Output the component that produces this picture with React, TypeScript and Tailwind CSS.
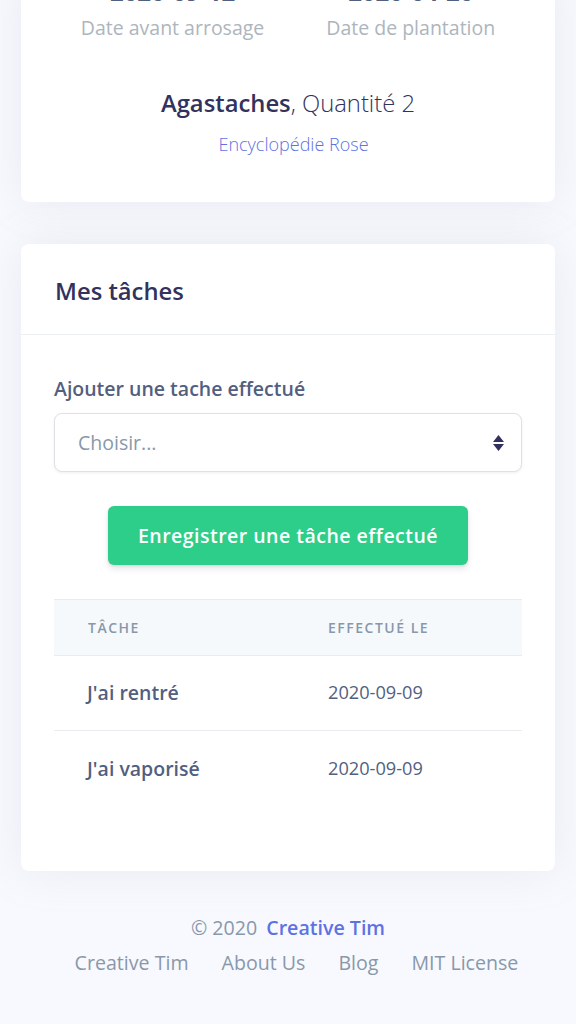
import { useState } from 'react';

interface Task {
  id: number;
  name: string;
  date: string;
}

const tasks: Task[] = [
  { id: 1, name: "J'ai rentré", date: '2020-09-09' },
  { id: 2, name: "J'ai vaporisé", date: '2020-09-09' },
];

const footerLinks = ['Creative Tim', 'About Us', 'Blog', 'MIT License'];

export default function App() {
  const [choice, setChoice] = useState('');

  return (
    <div className="min-h-[1024px] w-[576px] overflow-hidden bg-[#f8f9fe] px-[21px] font-['Open_Sans',sans-serif]">
      {/* Plant card (top cut off) */}
      <div className="rounded-b-[8px] bg-white pb-[44px] text-center shadow-[0_0_45px_0_rgba(136,152,170,0.15)]">
        <div className="-mt-[25px] flex justify-center gap-[62px]">
          <div className="flex flex-col items-center">
            <span className="text-[24px] leading-[34px] font-bold text-[#525f7f]">2020-09-12</span>
            <span className="mt-[4px] text-[19.5px] leading-[29px] text-[#adb5bd]">Date avant arrosage</span>
          </div>
          <div className="flex flex-col items-center">
            <span className="text-[24px] leading-[34px] font-bold text-[#525f7f]">2020-04-20</span>
            <span className="mt-[4px] text-[19.5px] leading-[29px] text-[#adb5bd]">Date de plantation</span>
          </div>
        </div>
        <h3 className="mt-[44px] text-[23.8px] leading-[34px] text-[#32325d]">
          <span className="font-semibold">Agastaches</span>
          <span className="font-light">, Quantité 2</span>
        </h3>
        <a className="mt-[11px] block pl-[11px] text-[18px] leading-[27px] font-light text-[#5e72e4]">Encyclopédie Rose</a>
      </div>

      {/* Tasks card */}
      <div className="mt-[42px] rounded-[8px] bg-white shadow-[0_0_45px_0_rgba(136,152,170,0.15)]">
        <div className="border-b border-[#edf0f3] px-[34px] pt-[30px] pb-[26px]">
          <h3 className="text-[23.8px] leading-[34px] font-semibold text-[#32325d]">Mes tâches</h3>
        </div>
        <div className="px-[33px] pt-[40px] pb-[65px]">
          <label className="block text-[19.5px] leading-[27px] font-semibold text-[#525f7f]">Ajouter une tache effectué</label>
          <div className="relative mt-[11px]">
            <select
              value={choice}
              onChange={(e) => setChoice(e.target.value)}
              className="h-[59px] w-full appearance-none rounded-[8px] border border-[#dee2e6] bg-white px-[23px] text-[19.5px] text-[#8898aa] shadow-[0_1px_3px_rgba(50,50,93,0.08)] outline-none"
            >
              <option value="">Choisir...</option>
              <option value="rentre">J'ai rentré</option>
              <option value="vaporise">J'ai vaporisé</option>
            </select>
            <svg className="pointer-events-none absolute top-[22px] right-[18px] h-[16px] w-[11px]" viewBox="0 0 4 5" preserveAspectRatio="none">
              <path d="M2 0L0 2.2h4zM2 5L0 2.8h4z" fill="#32325d" />
            </svg>
          </div>
          <div className="mt-[34px] flex justify-center">
            <button className="h-[59px] rounded-[6px] bg-[#2dce89] px-[30px] text-[19.5px] font-semibold tracking-[0.025em] text-white shadow-[0_4px_6px_rgba(50,50,93,0.11),0_1px_3px_rgba(0,0,0,0.08)]">
              Enregistrer une tâche effectué
            </button>
          </div>

          <table className="mt-[34px] w-full border-collapse">
            <thead>
              <tr className="border-y border-[#e9ecef] bg-[#f6f9fc]">
                <th className="h-[56px] w-[240px] pl-[34px] text-left text-[14px] font-semibold tracking-[1.5px] text-[#8898aa] uppercase">Tâche</th>
                <th className="pl-[34px] text-left text-[14px] font-semibold tracking-[1.5px] text-[#8898aa] uppercase">Effectué le</th>
              </tr>
            </thead>
            <tbody>
              {tasks.map((task, index) => (
                <tr key={task.id} className={index > 0 ? 'border-t border-[#e9ecef]' : ''}>
                  <td className="h-[75px] pl-[33px] text-[19.5px] font-semibold text-[#525f7f]">{task.name}</td>
                  <td className="pl-[34px] text-[18.2px] text-[#525f7f]">{task.date}</td>
                </tr>
              ))}
            </tbody>
          </table>
        </div>
      </div>

      {/* Footer */}
      <footer className="pt-[43px] pb-[40px] text-center">
        <div className="text-[19.6px] leading-[28px] text-[#8898aa]">
          © 2020 <a className="ml-[4px] font-semibold text-[#5e72e4]">Creative Tim</a>
        </div>
        <ul className="mt-[7px] flex justify-center gap-[33px] pl-[17px]">
          {footerLinks.map((link) => (
            <li key={link}>
              <a className="text-[19.6px] leading-[28px] text-[#8898aa]">{link}</a>
            </li>
          ))}
        </ul>
      </footer>
    </div>
  );
}
